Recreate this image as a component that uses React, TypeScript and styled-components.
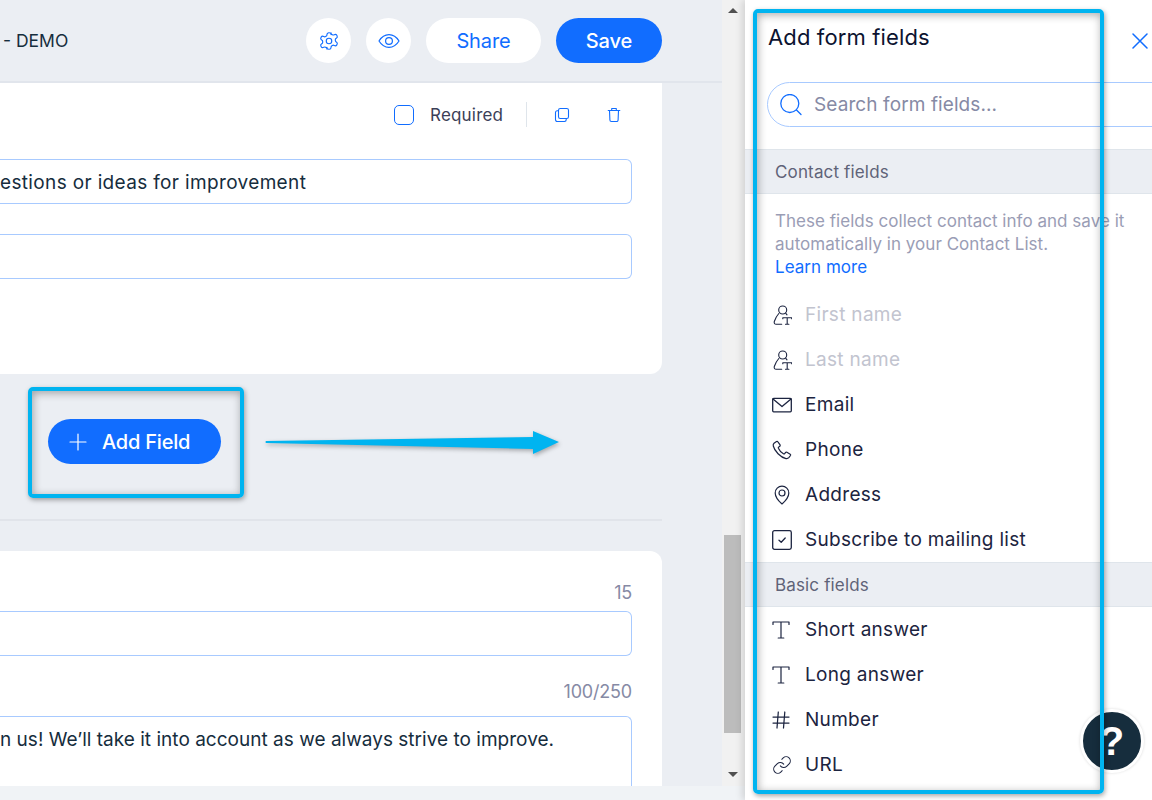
import React from "react";
import styled, { createGlobalStyle } from "styled-components";

const Global = createGlobalStyle`
  html, body { margin: 0; padding: 0; background: #fff; }
  body { font-family: Inter, "Noto Sans", "Liberation Sans", sans-serif; }
  * { box-sizing: border-box; }
`;

const Page = styled.div`
  position: relative;
  width: 1152px;
  height: 800px;
  overflow: hidden;
  display: flex;
`;
const LeftPane = styled.div`
  width: 745px;
  height: 800px;
  display: flex;
  flex-direction: column;
  flex: none;
`;
const UpperRow = styled.div`
  height: 786px;
  display: flex;
`;
const Band = styled.div`
  height: 14px;
  background: #f0f3f6;
`;
const Main = styled.div`
  width: 722px;
  height: 786px;
  background: #ebeef3;
  overflow: hidden;
  flex: none;
`;
const Header = styled.header`
  height: 83px;
  border-bottom: 2px solid #e1e5ec;
  padding: 18px 60px 0 3px;
  display: flex;
  align-items: flex-start;
  gap: 15px;
`;
const DemoTitle = styled.div`
  margin-right: auto;
  font-size: 17.5px;
  line-height: 45px;
  color: #162d3d;
`;
const RoundBtn = styled.button`
  width: 45px;
  height: 45px;
  border: 0;
  border-radius: 50%;
  background: #fff;
  display: flex;
  align-items: center;
  justify-content: center;
  padding: 0;
  color: #116dff;
`;
const PillBtn = styled.button<{ $primary?: boolean; $w: number }>`
  width: ${(p) => p.$w}px;
  height: 45px;
  border: 0;
  border-radius: 23px;
  padding: 0;
  font-family: inherit;
  font-size: 20px;
  font-weight: ${(p) => (p.$primary ? 500 : 400)};
  letter-spacing: -0.1px;
  background: ${(p) => (p.$primary ? "#116dff" : "#fff")};
  color: ${(p) => (p.$primary ? "#fff" : "#116dff")};
`;
const Column = styled.div`
  width: 662px;
`;
const TopCard = styled.section`
  height: 291px;
  background: #fff;
  border-bottom-right-radius: 12px;
  padding-top: 19px;
`;
const ToolRow = styled.div`
  height: 25px;
  display: flex;
  align-items: center;
  padding-left: 394px;
`;
const Check = styled.span`
  width: 20px;
  height: 20px;
  border: 1.5px solid #116dff;
  border-radius: 5px;
  flex: none;
`;
const RequiredLabel = styled.span`
  margin-left: 16px;
  width: 96px;
  font-size: 17px;
  color: #3b4057;
  letter-spacing: 0.2px;
`;
const Sep = styled.span`
  width: 1px;
  height: 25px;
  background: #dfe5eb;
`;
const ToolIcon = styled.span<{ $ml: number }>`
  margin-left: ${(p) => p.$ml}px;
  display: flex;
  color: #116dff;
`;
const Field = styled.div<{ $mt: number; $h?: number }>`
  margin-top: ${(p) => p.$mt}px;
  width: 632px;
  height: ${(p) => p.$h ?? 45}px;
  border: 1px solid #a8caff;
  border-left: 0;
  border-radius: 0 6px 6px 0;
  display: flex;
  align-items: center;
  overflow: hidden;
  font-size: 19px;
  color: #162d3d;
`;
const TallField = styled(Field)`
  align-items: flex-start;
  border-bottom: 0;
  border-radius: 0 6px 0 0;
  padding-top: 9px;
`;
const FieldText = styled.span<{ $ls: number }>`
  padding-top: 2px;
  white-space: nowrap;
  line-height: 24px;
  letter-spacing: ${(p) => p.$ls}px;
`;
const AddZone = styled.div`
  height: 147px;
  padding: 45px 0 0 48px;
  border-bottom: 2px solid #e1e4ea;
`;
const AddBtn = styled.button`
  width: 173px;
  height: 45px;
  border: 0;
  border-radius: 23px;
  background: #116dff;
  color: #fff;
  font-family: inherit;
  font-size: 20px;
  font-weight: 500;
  letter-spacing: -0.2px;
  display: flex;
  align-items: center;
  gap: 15px;
  padding: 1px 0 0 21px;
`;
const BottomCard = styled.section`
  margin-top: 30px;
  height: 240px;
  background: #fff;
  border-top-right-radius: 12px;
  padding-top: 31px;
`;
const Counter = styled.div<{ $mt?: number }>`
  width: 632px;
  margin-top: ${(p) => p.$mt ?? 0}px;
  text-align: right;
  font-size: 18px;
  line-height: 22px;
  color: #868aa5;
  letter-spacing: -0.2px;
`;
const Scroller = styled.div`
  width: 23px;
  height: 786px;
  background: #f1f1f1;
  display: flex;
  flex-direction: column;
  align-items: center;
  padding: 8px 4px 0 2px;
`;
const ArrowUp = styled.span`
  width: 0;
  height: 0;
  border-left: 5px solid transparent;
  border-right: 5px solid transparent;
  border-bottom: 5px solid #505050;
`;
const ArrowDown = styled.span`
  width: 0;
  height: 0;
  margin-top: 39px;
  border-left: 5px solid transparent;
  border-right: 5px solid transparent;
  border-top: 5px solid #505050;
`;
const Thumb = styled.span`
  width: 17px;
  height: 198px;
  margin-top: 522px;
  background: #bcbcbc;
`;

const RightPane = styled.aside`
  position: relative;
  width: 407px;
  height: 800px;
  flex: none;
  background: #fff;
  box-shadow: -3px 0 7px rgba(0, 0, 0, 0.13);
  overflow: hidden;
`;
const PaneHead = styled.div`
  height: 82px;
  padding: 23px 4px 0 23px;
  display: flex;
  justify-content: space-between;
  align-items: flex-start;
`;
const PaneTitle = styled.h2`
  margin: 0;
  font-size: 22px;
  font-weight: 400;
  line-height: 28px;
  color: #0c1330;
  letter-spacing: 0.13px;
`;
const CloseBtn = styled.span`
  display: flex;
  margin-top: 10px;
  color: #116dff;
`;
const Search = styled.div`
  margin-left: 22px;
  width: 420px;
  height: 45px;
  border: 1px solid #a8caff;
  border-radius: 23px;
  display: flex;
  align-items: center;
  padding: 0 0 0 12px;
  gap: 12px;
  color: #116dff;
`;
const SearchText = styled.span`
  font-size: 19px;
  color: #868aa5;
  letter-spacing: 0.1px;
`;
const SectionHead = styled.div<{ $mt?: number }>`
  margin-top: ${(p) => p.$mt ?? 0}px;
  height: 45px;
  padding-left: 30px;
  background: #ebeef3;
  border-top: 1px solid #dfe5eb;
  border-bottom: 1px solid #dfe5eb;
  display: flex;
  align-items: center;
  font-size: 17px;
  color: #5f6378;
  letter-spacing: 0.15px;
`;
const Intro = styled.p`
  margin: 0;
  padding: 16px 20px 12px 30px;
  height: 98px;
  font-size: 17px;
  line-height: 23px;
  color: #9a9db5;
  letter-spacing: 0.03px;
`;
const LearnMore = styled.a`
  display: block;
  color: #116dff;
`;
const Row = styled.div<{ $disabled?: boolean }>`
  height: 45px;
  padding-left: 27px;
  display: flex;
  align-items: center;
  gap: 13px;
  font-size: 19px;
  color: ${(p) => (p.$disabled ? "#c2c4cf" : "#1c2440")};
  letter-spacing: 0.3px;
`;
const RowIcon = styled.span`
  width: 20px;
  height: 22px;
  display: flex;
  align-items: center;
  justify-content: center;
  color: #1c2440;
  flex: none;
`;
const Help = styled.div`
  position: absolute;
  left: 1080px;
  top: 709px;
  width: 64px;
  height: 64px;
  border-radius: 50%;
  background: #162d3d;
  border: 3px solid #fff;
  box-shadow: 0 0 3px rgba(0, 0, 0, 0.15);
  color: #fff;
  font-family: "Liberation Sans", sans-serif;
  font-weight: 700;
  font-size: 40px;
  display: flex;
  align-items: center;
  justify-content: center;
`;
const Callout = styled.div<{ $x: number; $y: number; $w: number; $h: number }>`
  position: absolute;
  left: ${(p) => p.$x}px;
  top: ${(p) => p.$y}px;
  width: ${(p) => p.$w}px;
  height: ${(p) => p.$h}px;
  border: 4px solid #00b4f0;
  border-radius: 5px;
  box-shadow: 1px 2px 5px rgba(0, 0, 0, 0.35), inset 1px 2px 8px rgba(0, 0, 0, 0.33);
  pointer-events: none;
`;
const ArrowSvg = styled.svg`
  position: absolute;
  left: 260px;
  top: 424px;
  overflow: visible;
  filter: drop-shadow(1px 2px 2px rgba(0, 0, 0, 0.3));
`;

const Svg = ({ s = 20, children, vb = "0 0 20 20", w = 1.2 }: { s?: number; children: React.ReactNode; vb?: string; w?: number }) => (
  <svg width={s} height={s} viewBox={vb} fill="none" stroke="currentColor" strokeWidth={w} strokeLinecap="round" strokeLinejoin="round">
    {children}
  </svg>
);
const Gear = () => (
  <Svg s={22} vb="0 0 24 24" w={1.25}>
    <path d="M12.22 3h-.44a2 2 0 0 0-2 2v.18a2 2 0 0 1-1 1.73l-.43.25a2 2 0 0 1-2 0l-.15-.08a2 2 0 0 0-2.73.73l-.22.38a2 2 0 0 0 .73 2.73l.15.1a2 2 0 0 1 1 1.72v.51a2 2 0 0 1-1 1.74l-.15.09a2 2 0 0 0-.73 2.73l.22.38a2 2 0 0 0 2.73.73l.15-.08a2 2 0 0 1 2 0l.43.25a2 2 0 0 1 1 1.73V19a2 2 0 0 0 2 2h.44a2 2 0 0 0 2-2v-.18a2 2 0 0 1 1-1.73l.43-.25a2 2 0 0 1 2 0l.15.08a2 2 0 0 0 2.73-.73l.22-.39a2 2 0 0 0-.73-2.73l-.15-.08a2 2 0 0 1-1-1.74v-.5a2 2 0 0 1 1-1.74l.15-.09a2 2 0 0 0 .73-2.73l-.22-.38a2 2 0 0 0-2.73-.73l-.15.08a2 2 0 0 1-2 0l-.43-.25a2 2 0 0 1-1-1.73V5a2 2 0 0 0-2-2z" />
    <circle cx="12" cy="12" r="3" />
  </Svg>
);
const Eye = () => (
  <Svg s={24} vb="0 0 24 24" w={1.2}>
    <path d="M2 12c2.6-4.2 6-6.3 10-6.3S19.4 7.8 22 12c-2.6 4.2-6 6.3-10 6.3S4.6 16.2 2 12z" />
    <circle cx="12" cy="12" r="3.4" />
  </Svg>
);
const Copy = () => (
  <Svg s={16} vb="0 0 16 16" w={1.1}>
    <rect x="4.5" y="1.5" width="10" height="10" rx="1.8" />
    <path d="M4.5 3.8H3.2A1.7 1.7 0 0 0 1.5 5.5v7.3a1.7 1.7 0 0 0 1.7 1.7h7.3a1.7 1.7 0 0 0 1.7-1.7v-1.3" />
  </Svg>
);
const Trash = () => (
  <Svg s={16} vb="0 0 16 16" w={1.1}>
    <path d="M2.2 3.5h11.6M5.7 3.5V1.5h4.6v2M3.5 3.5l.4 9.5a1.5 1.5 0 0 0 1.5 1.5h5.2a1.5 1.5 0 0 0 1.5-1.5l.4-9.5" />
  </Svg>
);
const Plus = () => (
  <Svg s={18} vb="0 0 18 18" w={1.2}>
    <path d="M9 1v16M1 9h16" />
  </Svg>
);
const Close = () => (
  <Svg s={16} vb="0 0 16 16" w={1.5}>
    <path d="M1 1l14 14M15 1L1 15" />
  </Svg>
);
const SearchIcon = () => (
  <Svg s={22} vb="0 0 22 22" w={1.3}>
    <circle cx="9.8" cy="9.5" r="9" />
    <path d="M16.5 16l4.5 4.5" />
  </Svg>
);
const PersonT = () => (
  <Svg s={20} w={1.1}>
    <circle cx="10.7" cy="5" r="4" />
    <path d="M6.8 8.5C4.8 10.8 3.2 13.5 2.3 16.5c-.4 1.7.3 2.8 1.9 2.8h5.5M13.8 8.3l1.2 1.6" />
    <path d="M10.8 13.7v-1h8.9v1M15.2 12.7v6.6M13.5 19.3h3.4" />
  </Svg>
);
const Mail = () => (
  <Svg s={20} w={1.3}>
    <rect x="0.7" y="3.3" width="18.6" height="13.5" rx="1" />
    <path d="M1 4l9 7.5L19 4" />
  </Svg>
);
const Phone = () => (
  <Svg s={20} w={1.2}>
    <path d="M4.5 1.5L2 3.3c-.8.7-1 1.5-.7 2.7C2.5 11 8.5 17.5 14 18.6c1.2.2 2.1-.1 2.8-.9l1.7-2.2c.3-.5.2-1-.3-1.3l-3.3-2c-.5-.3-1-.2-1.3.2l-.9 1.2c-.3.4-.8.5-1.3.2-2-1-4-3.3-5-5.5-.2-.5-.1-1 .3-1.2l1.1-.9c.4-.3.5-.8.3-1.3L5.9 1.8c-.3-.5-.9-.6-1.4-.3z" />
  </Svg>
);
const Pin = () => (
  <Svg s={20} w={1.2}>
    <path d="M10 19C6 15.5 3.2 12 3.2 8a6.8 6.8 0 0 1 13.6 0c0 4-2.8 7.5-6.800 11z" />
    <circle cx="10" cy="8" r="3" />
  </Svg>
);
const CheckBox = () => (
  <Svg s={20} w={1.3}>
    <rect x="0.7" y="0.7" width="18.6" height="18.6" rx="1.8" />
    <path d="M7 10.2l2.2 2L13.2 8" />
  </Svg>
);
const SerifT = () => (
  <Svg s={20} w={1.2}>
    <path d="M1 4.5V2h16v2.5M9 2v16M6.2 18h5.6" />
  </Svg>
);
const Hash = () => (
  <Svg s={20} w={1.25}>
    <path d="M6.3 2L5 18M12.8 2L11.5 18M1 7h16M1 13h16" />
  </Svg>
);
const Link = () => (
  <Svg s={22} vb="0 0 24 24" w={1.25}>
    <path d="M10 13a5 5 0 0 0 7.54.54l3-3a5 5 0 0 0-7.07-7.07l-1.72 1.71" />
    <path d="M14 11a5 5 0 0 0-7.54-.54l-3 3a5 5 0 0 0 7.07 7.07l1.71-1.71" />
  </Svg>
);

const contact: [string, React.ReactNode, boolean?][] = [
  ["First name", <PersonT />, true],
  ["Last name", <PersonT />, true],
  ["Email", <Mail />],
  ["Phone", <Phone />],
  ["Address", <Pin />],
  ["Subscribe to mailing list", <CheckBox />],
];
const basic: [string, React.ReactNode][] = [
  ["Short answer", <SerifT />],
  ["Long answer", <SerifT />],
  ["Number", <Hash />],
  ["URL", <Link />],
];

export default function App() {
  return (
    <Page>
      <Global />
      <LeftPane>
        <UpperRow>
          <Main>
            <Header>
              <DemoTitle>- DEMO</DemoTitle>
              <RoundBtn><Gear /></RoundBtn>
              <RoundBtn><Eye /></RoundBtn>
              <PillBtn $w={115}>Share</PillBtn>
              <PillBtn $w={106} $primary>Save</PillBtn>
            </Header>
            <Column>
              <TopCard>
                <ToolRow>
                  <Check />
                  <RequiredLabel>Required</RequiredLabel>
                  <Sep />
                  <ToolIcon $ml={27}><Copy /></ToolIcon>
                  <ToolIcon $ml={36}><Trash /></ToolIcon>
                </ToolRow>
                <Field $mt={32}>
                  <FieldText $ls={0.35}>estions or ideas for improvement</FieldText>
                </Field>
                <Field $mt={30} />
              </TopCard>
              <AddZone>
                <AddBtn><Plus />Add Field</AddBtn>
              </AddZone>
              <BottomCard>
                <Counter>15</Counter>
                <Field $mt={7} />
                <Counter $mt={25}>100/250</Counter>
                <TallField $mt={13} $h={70}>
                  <FieldText $ls={0.02}>n us! We’ll take it into account as we always strive to improve.</FieldText>
                </TallField>
              </BottomCard>
            </Column>
          </Main>
          <Scroller>
            <ArrowUp />
            <Thumb />
            <ArrowDown />
          </Scroller>
        </UpperRow>
        <Band />
      </LeftPane>
      <RightPane>
        <PaneHead>
          <PaneTitle>Add form fields</PaneTitle>
          <CloseBtn><Close /></CloseBtn>
        </PaneHead>
        <Search>
          <SearchIcon />
          <SearchText>Search form fields...</SearchText>
        </Search>
        <SectionHead $mt={22}>Contact fields</SectionHead>
        <Intro>
          These fields collect contact info and save it automatically in your Contact List.
          <LearnMore>Learn more</LearnMore>
        </Intro>
        {contact.map(([label, icon, disabled]) => (
          <Row key={label} $disabled={disabled}>
            <RowIcon>{icon}</RowIcon>
            {label}
          </Row>
        ))}
        <SectionHead>Basic fields</SectionHead>
        {basic.map(([label, icon]) => (
          <Row key={label}>
            <RowIcon>{icon}</RowIcon>
            {label}
          </Row>
        ))}
      </RightPane>
      <Help>?</Help>
      <Callout $x={28} $y={387} $w={216} $h={111} />
      <Callout $x={753} $y={9} $w={351} $h={785} />
      <ArrowSvg width="300" height="32" viewBox="0 0 300 32">
        <path d="M6 17 L273 13 L273 7 L299 18 L273 30 L273 25 L6 19 Q5 18 6 17 Z" fill="#00b4f0" />
      </ArrowSvg>
    </Page>
  );
}
